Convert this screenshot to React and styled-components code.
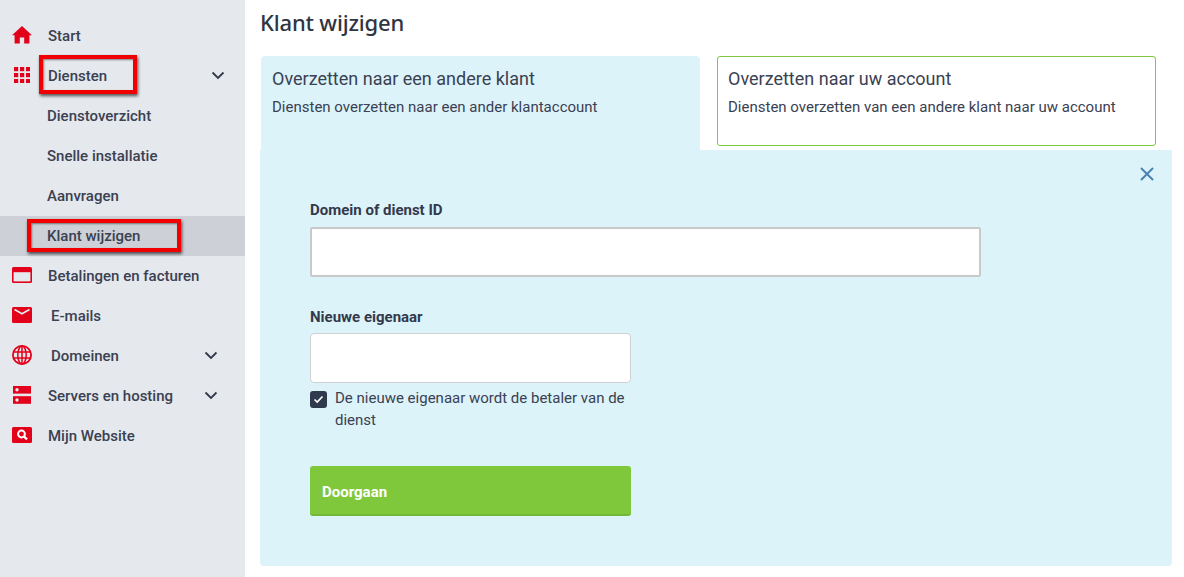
import React from "react";
import styled, { createGlobalStyle } from "styled-components";

const Global = createGlobalStyle`
  html, body { margin: 0; padding: 0; background: #fff; }
  body { font-family: Roboto, "Liberation Sans", sans-serif; color: #353c4c; }
  * { box-sizing: border-box; }
`;

const RED = "#e2001a";

const Page = styled.div`
  display: flex;
  width: 1184px;
  height: 577px;
  overflow: hidden;
`;

const Sidebar = styled.nav`
  position: relative;
  width: 245px;
  flex: none;
  background: #e5e8ec;
  padding-top: 16px;
`;

const Row = styled.div`
  display: flex;
  align-items: center;
  height: 40px;
  padding-left: ${(p) => p.$left ?? 12}px;
  background: ${(p) => (p.$active ? "#cdd0d6" : "transparent")};
  font-size: 15px;
  font-weight: 500;
  color: #3a4152;
`;

const IconSlot = styled.span`
  display: flex;
  align-items: center;
  justify-content: center;
  flex: none;
  width: 20px;
  height: 20px;
  margin-right: ${(p) => p.$gap ?? 16}px;
  transform: translateY(-1px);
`;

const Chevron = styled.svg`
  position: absolute;
  right: ${(p) => p.$right}px;
  width: 14px;
  height: 9px;
  margin-top: -2px;
`;

const Annotation = styled.div`
  position: absolute;
  border: 4px solid #f00000;
  box-shadow: 1px 2px 3px rgba(0, 0, 0, 0.65), inset 1px 1px 2px rgba(0, 0, 0, 0.45);
`;

const Main = styled.main`
  flex: 1;
  padding-left: 15px;
  padding-right: 12px;
`;

const Title = styled.h1`
  margin: 0;
  height: 56px;
  padding: 8px 0 0 0;
  font-family: "Noto Sans", "Open Sans", sans-serif;
  font-size: 22px;
  line-height: 29px;
  font-weight: 500;
  letter-spacing: -0.17px;
  color: #2f3542;
`;

const Tabs = styled.div`
  display: flex;
  align-items: flex-start;
  gap: 17px;
  padding-left: 1px;
`;

const Tab = styled.div`
  width: 439px;
  height: ${(p) => (p.$open ? 94 : 90)}px;
  padding: ${(p) => (p.$open ? "12px 11px" : "11px 10px")};
  background: ${(p) => (p.$open ? "#ddf3fa" : "#fff")};
  border: ${(p) => (p.$open ? "none" : "1px solid #7fc73c")};
  border-radius: ${(p) => (p.$open ? "4px 4px 0 0" : "3px")};
`;

const TabTitle = styled.div`
  font-size: 18px;
  line-height: 22px;
  color: #3a4152;
`;

const TabText = styled.div`
  margin-top: 7px;
  font-size: 15px;
  line-height: 20px;
  color: #3a4152;
`;

const Panel = styled.section`
  position: relative;
  width: 912px;
  height: 416px;
  background: #ddf3fa;
  border-radius: 0 0 4px 4px;
  padding: 50px 0 0 50px;
`;

const Close = styled.svg`
  position: absolute;
  top: 17px;
  right: 18px;
  width: 14px;
  height: 14px;
`;

const Label = styled.label`
  display: block;
  height: ${(p) => p.$h}px;
  font-size: 15px;
  font-weight: 700;
  line-height: 21px;
  color: #33394a;
`;

const Input = styled.input`
  display: block;
  width: ${(p) => p.$w}px;
  height: 50px;
  margin-bottom: ${(p) => p.$mb ?? 0}px;
  background: #fff;
  border: 1px solid ${(p) => (p.$strong ? "#c8c9cb" : "#cfd1d4")};
  border-width: ${(p) => (p.$strong ? "2px 2px 2px 2px" : "1px")};
  border-radius: ${(p) => (p.$strong ? 2 : 4)}px;
  outline: none;
`;

const CheckRow = styled.div`
  display: flex;
  width: 321px;
  margin-top: 4px;
  font-size: 15px;
  line-height: 22px;
  color: #3a4152;
`;

const CheckBox = styled.span`
  display: flex;
  align-items: center;
  justify-content: center;
  flex: none;
  width: 17px;
  height: 17px;
  margin: 4px 8px 0 0;
  background: #2f3a4d;
  border-radius: 3px;
`;

const Button = styled.button`
  display: block;
  width: 321px;
  height: 50px;
  margin-top: 35px;
  padding: 3px 12px 0;
  text-align: left;
  background: #7fc83c;
  border: none;
  border-bottom: 2px solid #74b737;
  border-radius: 3px;
  color: #fff;
  font-family: inherit;
  font-size: 15px;
  font-weight: 700;
`;

const Home = () => (
  <svg width="20" height="18" viewBox="0 0 20 18"><path fill={RED} d="M10 0 L20 9.2 L17.4 9.2 L17.4 17.4 L12.2 17.4 L12.2 11.5 L7.8 11.5 L7.8 17.4 L2.6 17.4 L2.6 9.2 L0 9.2 Z" /></svg>
);
const Grid = () => (
  <svg width="16" height="16" viewBox="0 0 16 16" fill={RED}>
    {[0, 6, 12].flatMap((y) => [0, 6, 12].map((x) => <rect key={`${x}-${y}`} x={x} y={y} width="4.2" height="4.2" />))}
  </svg>
);
const Card = () => (
  <svg width="20" height="16" viewBox="0 0 20 16"><rect width="20" height="16" rx="1.5" fill={RED} /><rect x="1.6" y="5.2" width="16.8" height="9.2" fill="#e5e8ec" /></svg>
);
const Mail = () => (
  <svg width="20" height="16" viewBox="0 0 20 16"><rect width="20" height="16" rx="1.5" fill={RED} /><path d="M2.5 2.5 L10 6.8 L17.5 2.5" fill="none" stroke="#e5e8ec" strokeWidth="1.7" /></svg>
);
const Globe = () => (
  <svg width="20" height="20" viewBox="0 0 20 20" fill="none" stroke={RED} strokeWidth="1.5"><circle cx="10" cy="10" r="9.1" strokeWidth="1.8" /><ellipse cx="10" cy="10" rx="4.2" ry="9.1" /><path d="M10 1V19M1.3 7H18.7M1.3 13H18.7" /></svg>
);
const Server = () => (
  <svg width="18" height="18" viewBox="0 0 18 18"><rect y="0" width="18" height="7.6" fill={RED} /><rect y="10.2" width="18" height="7.6" fill={RED} /><circle cx="4" cy="3.8" r="1.7" fill="#e5e8ec" /><circle cx="4" cy="14" r="1.7" fill="#e5e8ec" /></svg>
);
const Search = () => (
  <svg width="20" height="16" viewBox="0 0 20 16"><rect width="20" height="16" rx="1.5" fill={RED} /><circle cx="9.5" cy="7" r="3.4" fill="none" stroke="#fff" strokeWidth="2" /><path d="M12 9.5L15 12.4" stroke="#fff" strokeWidth="2.4" /></svg>
);
const Down = ({ right }) => (
  <Chevron $right={right} viewBox="0 0 14 9"><path d="M1.5 1.5 L7 7 L12.5 1.5" fill="none" stroke="#33394a" strokeWidth="1.8" /></Chevron>
);

export default function App() {
  return (
    <Page>
      <Global />
      <Sidebar>
        <Row><IconSlot><Home /></IconSlot>Start</Row>
        <Row><IconSlot><Grid /></IconSlot>Diensten<Down right={20} /></Row>
        <Row $left={47}>Dienstoverzicht</Row>
        <Row $left={47}>Snelle installatie</Row>
        <Row $left={47}>Aanvragen</Row>
        <Row $left={47} $active>Klant wijzigen</Row>
        <Row><IconSlot><Card /></IconSlot>Betalingen en facturen</Row>
        <Row><IconSlot $gap={19}><Mail /></IconSlot>E-mails</Row>
        <Row><IconSlot $gap={19}><Globe /></IconSlot>Domeinen<Down right={27} /></Row>
        <Row><IconSlot><Server /></IconSlot>Servers en hosting<Down right={27} /></Row>
        <Row><IconSlot><Search /></IconSlot>Mijn Website</Row>
        <Annotation style={{ left: 39, top: 55, width: 98, height: 39 }} />
        <Annotation style={{ left: 27, top: 219, width: 154, height: 33 }} />
      </Sidebar>
      <Main>
        <Title>Klant wijzigen</Title>
        <Tabs>
          <Tab $open>
            <TabTitle>Overzetten naar een andere klant</TabTitle>
            <TabText>Diensten overzetten naar een ander klantaccount</TabText>
          </Tab>
          <Tab>
            <TabTitle>Overzetten naar uw account</TabTitle>
            <TabText>Diensten overzetten van een andere klant naar uw account</TabText>
          </Tab>
        </Tabs>
        <Panel>
          <Close viewBox="0 0 14 14"><path d="M1 1L13 13M13 1L1 13" stroke="#4a82b5" strokeWidth="2" fill="none" /></Close>
          <Label $h={27}>Domein of dienst ID</Label>
          <Input $w={671} $mb={30} $strong />
          <Label $h={26}>Nieuwe eigenaar</Label>
          <Input $w={321} />
          <CheckRow>
            <CheckBox>
              <svg width="11" height="9" viewBox="0 0 11 9"><path d="M1.5 4.5L4.2 7L9.5 1.5" fill="none" stroke="#fff" strokeWidth="1.7" /></svg>
            </CheckBox>
            <span>De nieuwe eigenaar wordt de betaler van de dienst</span>
          </CheckRow>
          <Button>Doorgaan</Button>
        </Panel>
      </Main>
    </Page>
  );
}
